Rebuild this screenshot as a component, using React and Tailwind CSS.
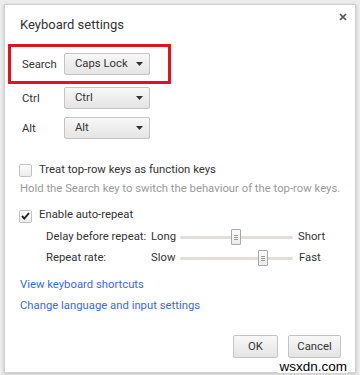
import { useState } from "react";

function Select({ value }) {
  return (
    <div className="w-[86px] h-[22px] flex items-center justify-between pl-[10px] pr-[6px] border border-[#c4c4c4] rounded-[2px] bg-gradient-to-b from-[#f8f8f8] to-[#e4e4e4] text-[#333]">
      <span className="whitespace-nowrap">{value}</span>
      <svg width="7" height="4" viewBox="0 0 7 4">
        <path d="M0 0h7L3.5 4z" fill="#333" />
      </svg>
    </div>
  );
}

function Checkbox({ checked }) {
  return (
    <div className="w-[13px] h-[13px] border border-[#c2c2c2] rounded-[2px] bg-gradient-to-b from-[#fdfdfd] to-[#ececec] flex items-center justify-center shrink-0">
      {checked && (
        <svg width="9" height="8" viewBox="0 0 9 8">
          <path d="M1 4l2.3 2.6L8 1" stroke="#222" strokeWidth="1.9" fill="none" />
        </svg>
      )}
    </div>
  );
}

function Slider({ pos }) {
  return (
    <div className="relative w-[113px] h-[18px] flex items-center">
      <div className="w-full h-[3px] bg-[#e2dfda] rounded" />
      <div
        className="absolute top-px w-[10px] h-[16px] border border-[#a8a8a8] rounded-[1px] bg-gradient-to-b from-[#fafafa] to-[#ececec] flex flex-col items-center justify-center gap-[1px]"
        style={{ left: pos }}
      >
        <div className="w-[4px] h-px bg-[#999]" />
        <div className="w-[4px] h-px bg-[#999]" />
        <div className="w-[4px] h-px bg-[#999]" />
      </div>
    </div>
  );
}

export default function App() {
  const [rows] = useState([
    ["Ctrl", "Ctrl", "mt-[3px]"],
    ["Alt", "Alt", "mt-[8px]"],
  ]);

  return (
    <div className="w-[360px] h-[375px] bg-[#ececec] pt-[4px] pl-[4px] font-['Roboto',sans-serif] text-[11.3px] leading-[14px] text-[#333] relative overflow-hidden">
      <div className="w-[352px] h-[369px] bg-white border border-[#d0d0d0] shadow-[0_1px_3px_rgba(0,0,0,0.2)] relative">
        <div className="absolute right-[8px] top-[8px]">
          <svg width="8" height="8" viewBox="0 0 8 8">
            <path d="M1 1l6 6M7 1L1 7" stroke="#555" strokeWidth="1.7" />
          </svg>
        </div>
        <div className="pl-[15px] pt-[11px] text-[13px] leading-[18px] text-[#333]">Keyboard settings</div>

        <div className="mt-[10px] ml-[3px] w-[163px] h-[40px] border-[3px] border-[#e0141e] flex items-center pl-[11px]">
          <span className="w-[42px] pt-[2px]">Search</span>
          <Select value="Caps Lock" />
        </div>

        {rows.map(([label, value, mt]) => (
          <div key={label} className={`flex items-center pl-[17px] ${mt}`}>
            <span className="w-[42px] pt-[1px]">{label}</span>
            <Select value={value} />
          </div>
        ))}

        <div className="flex items-center gap-[7px] pl-[14px] mt-[24px] h-[14px]">
          <Checkbox />
          <span className="whitespace-nowrap">Treat top-row keys as function keys</span>
        </div>
        <div className="pl-[15px] mt-[5px] text-[#9a9a9a] whitespace-nowrap">
          Hold the Search key to switch the behaviour of the top-row keys.
        </div>

        <div className="flex items-center gap-[7px] pl-[14px] mt-[13px] h-[14px]">
          <Checkbox checked />
          <span className="whitespace-nowrap -mt-[2px]">Enable auto-repeat</span>
        </div>

        <div className="grid grid-cols-[105px_29px_113px_auto] items-center gap-y-[3px] pl-[41px] mt-[5px] whitespace-nowrap">
          <span>Delay before repeat:</span>
          <span>Long</span>
          <Slider pos={51} />
          <span className="pl-[5px]">Short</span>
          <span>Repeat rate:</span>
          <span>Slow</span>
          <Slider pos={78} />
          <span className="pl-[6px]">Fast</span>
        </div>

        <div className="pl-[15px] mt-[11px] flex flex-col gap-[7px] text-[#3a6cd6] whitespace-nowrap">
          <span>View keyboard shortcuts</span>
          <span>Change language and input settings</span>
        </div>

        <div className="flex justify-end gap-[10px] pr-[14px] mt-[22px]">
          <div className="w-[45px] h-[23px] flex items-center justify-center border border-[#c4c4c4] rounded-[2px] bg-gradient-to-b from-[#f8f8f8] to-[#e4e4e4]">OK</div>
          <div className="w-[53px] h-[23px] flex items-center justify-center border border-[#c4c4c4] rounded-[2px] bg-gradient-to-b from-[#f8f8f8] to-[#e4e4e4]">Cancel</div>
        </div>
      </div>
      <div className="absolute right-[12px] bottom-[2px] bg-white text-black text-[13.5px] leading-[12px] px-[1px] font-['Liberation_Sans',sans-serif]">wsxdn.com</div>
    </div>
  );
}
